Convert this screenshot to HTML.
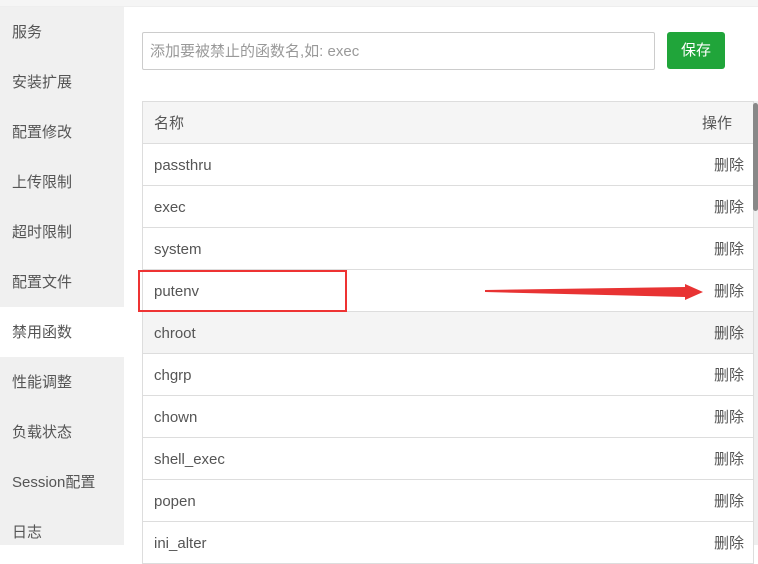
<!DOCTYPE html>
<html><head><meta charset="utf-8"><style>
*{margin:0;padding:0;box-sizing:border-box}
body{width:758px;height:545px;overflow:hidden;background:#fff;font-family:"Liberation Sans","Noto Sans CJK SC",sans-serif;color:#555;position:relative}
.top{position:absolute;left:0;top:0;width:758px;height:7px;background:#f5f5f5;border-bottom:1px solid #eee}
.side{position:absolute;left:0;top:7px;width:124px;height:538px;background:#f0f0f0}
.side div{position:absolute;left:12px;font-size:15px;color:#555;line-height:22px}
.act{position:absolute;left:0;top:300px;width:124px;height:50px;background:#fff}
.inp{position:absolute;left:142px;top:32px;width:513px;height:38px;border:1px solid #ccc;border-radius:2px;font-size:15px;color:#999;padding-left:7px;line-height:38px}
.btn{position:absolute;left:667px;top:32px;width:58px;height:37px;background:#20a53a;border-radius:3px;color:#fff;font-size:15px;text-align:center;line-height:38px}
.tbl{position:absolute;left:142px;top:101px;width:612px;border:1px solid #ddd;border-bottom:none}
.row{height:42px;border-bottom:1px solid #ddd;position:relative;font-size:15px;line-height:40px;padding-top:2px;padding-left:11px;color:#555}
.row span{position:absolute;right:9px;top:2px;font-size:15px;color:#555}
.hd{background:#f5f5f5;font-size:15px}
.hd span{right:21px}
.sb{position:absolute;left:754px;top:101px;width:4px;height:444px;background:#eee}
.th{position:absolute;left:753px;top:103px;width:5px;height:108px;background:#888;border-radius:3px}
</style></head><body>
<div class="top"></div>
<div class="side">
<div class="act" style="left:0"></div>
<div style="top:15px">服务</div>
<div style="top:65px">安装扩展</div>
<div style="top:115px">配置修改</div>
<div style="top:165px">上传限制</div>
<div style="top:215px">超时限制</div>
<div style="top:265px">配置文件</div>
<div style="top:315px">禁用函数</div>
<div style="top:365px">性能调整</div>
<div style="top:415px">负载状态</div>
<div style="top:465px">Session配置</div>
<div style="top:515px">日志</div>
</div>
<div class="inp">添加要被禁止的函数名,如: exec</div>
<div class="btn">保存</div>
<div class="tbl">
<div class="row hd">名称<span>操作</span></div>
<div class="row">passthru<span>删除</span></div>
<div class="row">exec<span>删除</span></div>
<div class="row">system<span>删除</span></div>
<div class="row">putenv<span>删除</span></div>
<div class="row" style="background:#f4f4f4">chroot<span>删除</span></div>
<div class="row">chgrp<span>删除</span></div>
<div class="row">chown<span>删除</span></div>
<div class="row">shell_exec<span>删除</span></div>
<div class="row">popen<span>删除</span></div>
<div class="row">ini_alter<span>删除</span></div>
</div>
<div class="sb"></div><div class="th"></div>
<div style="position:absolute;left:138px;top:270px;width:209px;height:42px;border:2px solid #e33"></div>
<svg style="position:absolute;left:0;top:0" width="758" height="545"><polygon points="485,290 685,287 685,284 703,292 685,300 685,297 485,292" fill="#e83333"/></svg>
</body></html>
